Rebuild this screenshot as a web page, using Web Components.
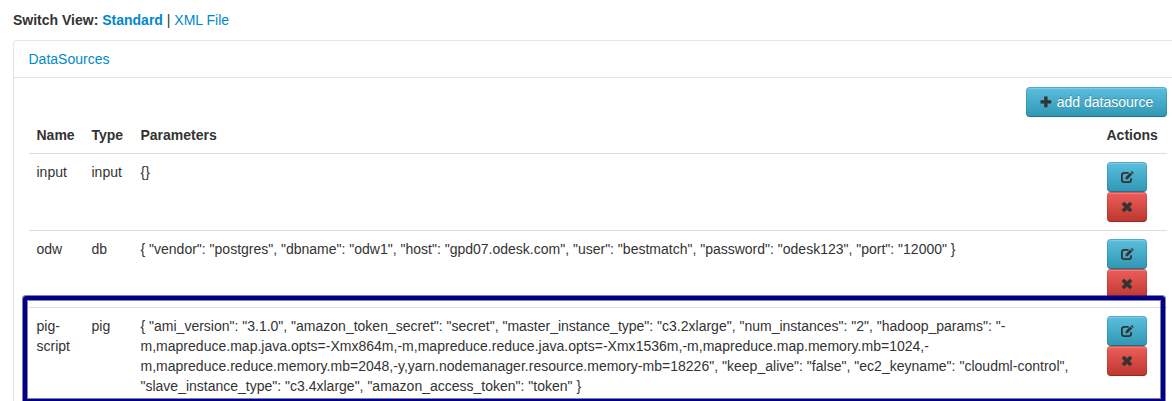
<!DOCTYPE html>
<html lang="en">
<head>
<meta charset="utf-8">
<title>DataSources</title>
<style>
html,body{margin:0;background:#fff;height:401px;overflow:hidden}
body{font:14px/20px "Liberation Sans",Arial,sans-serif;color:#333}
</style>
</head>
<body>
<data-page></data-page>
<script>
const define=(name,html)=>{
  const t=document.createElement('template');t.innerHTML=html;
  customElements.define(name,class extends HTMLElement{
    constructor(){super();this.attachShadow({mode:'open'}).append(t.content.cloneNode(true));}
  });
};
const ICONS={
  plus:'<path d="M4.200 .5h3.300v3.700h3.700v3.300H7.500v3.700H4.200V7.500H.5V4.200h3.700z"/>',
  remove:'<path d="M3.200 1 6 3.700 8.800 1 11 3.200 8.300 6 11 8.800 8.800 11 6 8.300 3.200 11 1 8.800 3.700 6 1 3.200z" stroke="#333" stroke-width=".6" stroke-linejoin="round"/>',
  edit:'<path d="M7.600 1.800H3.400Q.9 1.800.9 4.200v4.600q0 2.400 2.500 2.400h4.200q2.500 0 2.500-2.400V7.200" fill="none" stroke="#333" stroke-width="1.800"/><path d="M4.600 6.300 9.300 1.600l1.900 1.900L6.500 8.200H4.600zM9.900 1l1-1 1.900 1.900-1 1z"/>'
};
customElements.define('glyph-icon',class extends HTMLElement{
  connectedCallback(){
    if(this.shadowRoot)return;
    this.attachShadow({mode:'open'}).innerHTML=`<style>:host{display:block;width:12px;height:12px}svg{display:block;overflow:visible}</style><svg width="12" height="12" viewBox="0 0 12 12" fill="#333">${ICONS[this.getAttribute('name')]}</svg>`;
  }
});
define('push-button',`<style>
:host{display:flex;box-sizing:border-box;height:30px;align-items:center;justify-content:center;border:1px solid;border-radius:4px;color:#fff;text-shadow:0 -1px 0 rgba(0,0,0,.25);
border-color:rgba(0,0,0,.1) rgba(0,0,0,.1) rgba(0,0,0,.25);background:#49afcd linear-gradient(#5bc0de,#2f96b4) border-box;box-shadow:inset 0 1px 0 rgba(255,255,255,.2),0 1px 2px rgba(0,0,0,.05)}
:host([danger]){background:#da4f49 linear-gradient(#ee5f5b,#bd362f) border-box}
</style><slot></slot>`);
define('row-actions',`<style>:host{display:block;width:40px;margin-left:.5px}</style>
<push-button><glyph-icon name="edit"></glyph-icon></push-button>
<push-button danger><glyph-icon name="remove"></glyph-icon></push-button>`);
define('data-row',`<style>
:host{display:grid;grid-template-columns:55px 49px 966px 68px;border-top:1px solid #ddd;height:76px}
:host([head]){border:0;height:36px;font-weight:bold}
div{padding:8px 8px 8px 7.5px;white-space:nowrap}
</style><div><slot name="name"></slot></div><div><slot name="type"></slot></div><div><slot name="params"></slot></div><div><slot name="actions"></slot></div>`);
define('source-panel',`<style>
:host{display:block;border:1px solid #e5e5e5;border-radius:4px;height:420px;width:1168px}
header{padding:8px 14.5px;border-bottom:1px solid #e5e5e5;color:#08c}
section{padding:9px 15px;width:1138px}
</style><header><slot name="title"></slot></header><section><slot></slot></section>`);
define('focus-frame',`<style>:host{position:absolute;left:23px;top:296px;width:1142px;height:107px;box-sizing:border-box;border:4px solid #000080;border-radius:3px;box-shadow:0 0 0 1px rgba(0,0,128,.5),inset 0 0 0 1px rgba(0,0,128,.5)}</style>`);
define('data-page',`<style>
:host{display:block;position:relative;height:401px;overflow:hidden;padding-left:13px}
nav{padding:10px 0;height:20px}
a{color:#08c}
.wide{letter-spacing:.015px}
.bar{display:flex;justify-content:flex-end}
.bar push-button{width:141px;gap:5px}
</style>
<nav><b>Switch View: <a>Standard</a></b> | <a>XML File</a></nav>
<source-panel><span slot="title">DataSources</span>
<div class="bar"><push-button><glyph-icon name="plus"></glyph-icon><span>add datasource</span></push-button></div>
<data-row head><span slot="name">Name</span><span slot="type">Type</span><span slot="params">Parameters</span><span slot="actions">Actions</span></data-row>
<data-row><span slot="name">input</span><span slot="type">input</span><span slot="params">{}</span><row-actions slot="actions"></row-actions></data-row>
<data-row><span slot="name">odw</span><span slot="type">db</span><span slot="params">{ "vendor": "postgres", "dbname": "odw1", "host": "gpd07.odesk.com", "user": "bestmatch", "password": "odesk123", "port": "12000" }</span><row-actions slot="actions"></row-actions></data-row>
<data-row><span slot="name">pig-<br>script</span><span slot="type">pig</span><span slot="params">{ "ami_version": "3.1.0", "amazon_token_secret": "secret", "master_instance_type": "c3.2xlarge", "num_instances": "2", "hadoop_params": "-<br><span class="wide">m,mapreduce.map.java.opts=-Xmx864m,-m,mapreduce.reduce.java.opts=-Xmx1536m,-m,mapreduce.map.memory.mb=1024,-<br>m,mapreduce.reduce.memory.mb=2048,-y,yarn.nodemanager.resource.memory-mb=18226", "keep_alive": "false", "ec2_keyname": "cloudml-control",</span><br>"slave_instance_type": "c3.4xlarge", "amazon_access_token": "token" }</span><row-actions slot="actions"></row-actions></data-row>
</source-panel>
<focus-frame></focus-frame>`);
</script>
</body>
</html>
